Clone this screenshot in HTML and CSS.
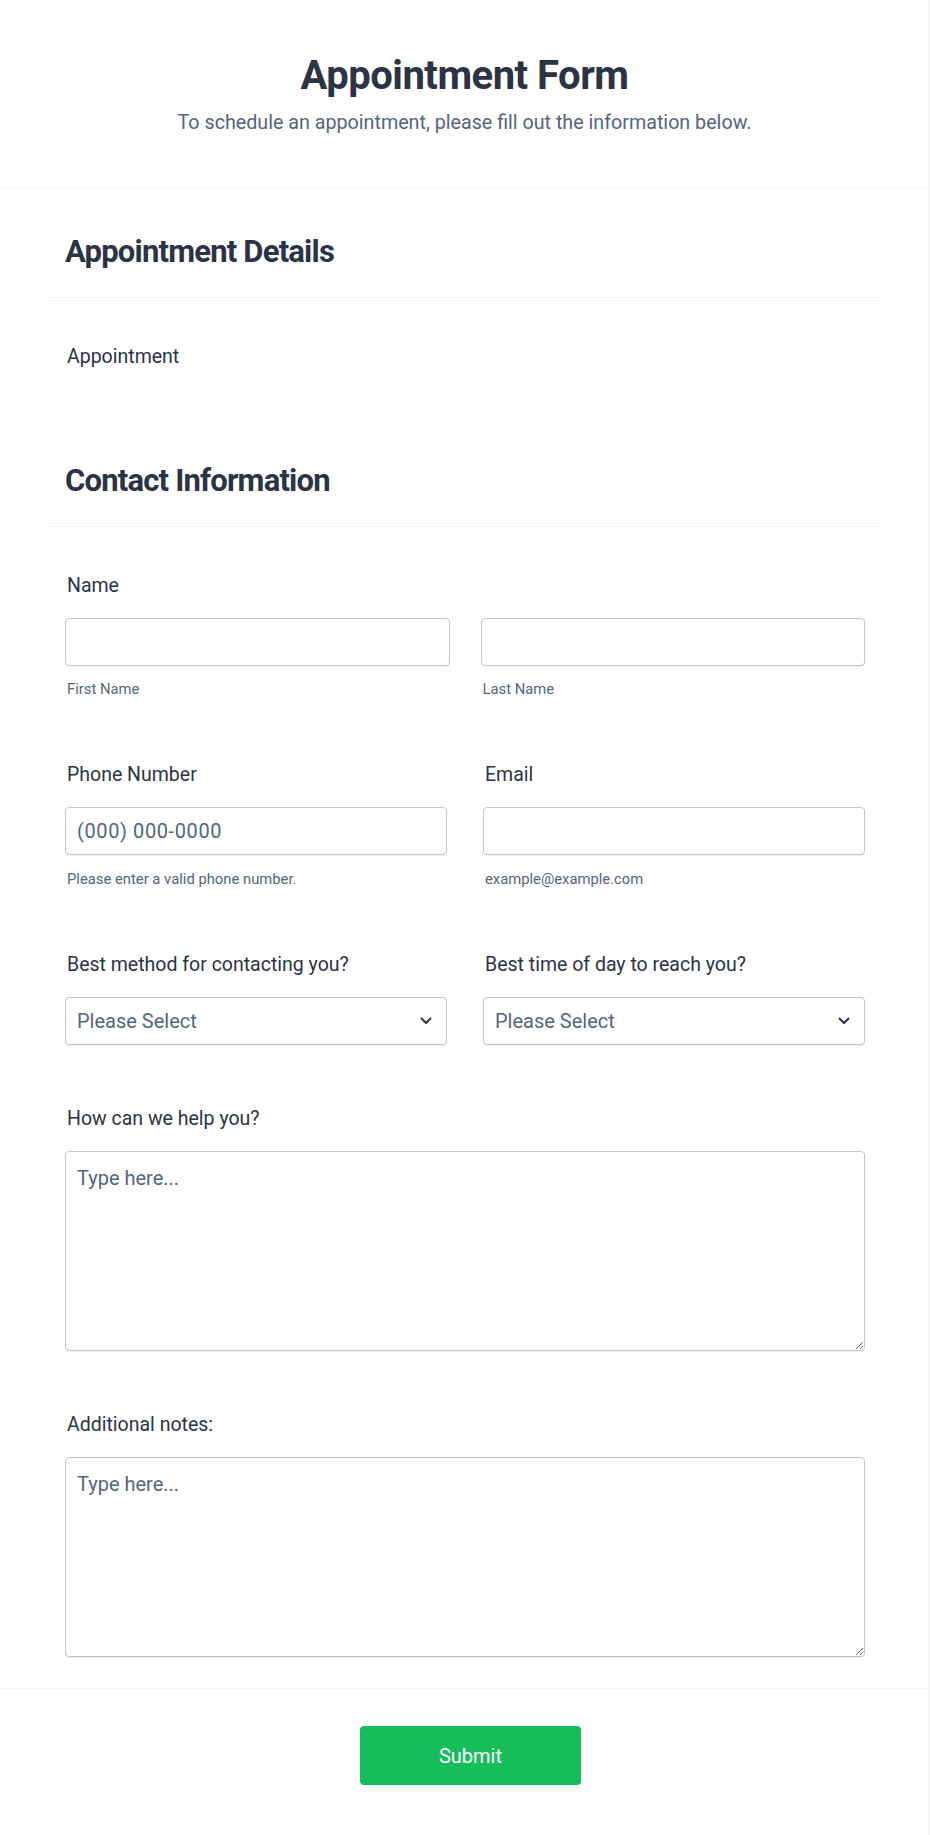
FILE: index.html
```html
<!DOCTYPE html>
<html lang="en">
<head>
<meta charset="utf-8">
<title>Appointment Form</title>
<link rel="stylesheet" href="styles.css">
</head>
<body>
<div class="form">
  <header class="form-header">
    <h1 class="title">Appointment Form</h1>
    <p class="subtitle">To schedule an appointment, please fill out the information below.</p>
  </header>

  <main class="form-body">
    <h2 class="section-head first">Appointment Details</h2>
    <div class="field appt">
      <label class="label">Appointment</label>
    </div>

    <h2 class="section-head second">Contact Information</h2>

    <div class="field row-name">
      <label class="label">Name</label>
      <div class="pair pair-name">
        <div class="col">
          <input class="input" type="text">
          <span class="sublabel">First Name</span>
        </div>
        <div class="col">
          <input class="input" type="text">
          <span class="sublabel">Last Name</span>
        </div>
      </div>
    </div>

    <div class="pair pair-wide row-gap">
      <div class="col">
        <label class="label">Phone Number</label>
        <input class="input phone" type="tel" placeholder="(000) 000-0000">
        <span class="sublabel">Please enter a valid phone number.</span>
      </div>
      <div class="col">
        <label class="label">Email</label>
        <input class="input" type="email">
        <span class="sublabel">example@example.com</span>
      </div>
    </div>

    <div class="pair pair-wide row-gap">
      <div class="col">
        <label class="label">Best method for contacting you?</label>
        <div class="select-wrap">
          <select class="input select"><option>Please Select</option></select>
          <svg class="chevron" width="12" height="8" viewBox="0 0 12 8"><path d="M1.5 1.5 L6 6 L10.5 1.5" fill="none" stroke="#2c3345" stroke-width="2" stroke-linecap="round" stroke-linejoin="round"/></svg>
        </div>
      </div>
      <div class="col">
        <label class="label">Best time of day to reach you?</label>
        <div class="select-wrap">
          <select class="input select"><option>Please Select</option></select>
          <svg class="chevron" width="12" height="8" viewBox="0 0 12 8"><path d="M1.5 1.5 L6 6 L10.5 1.5" fill="none" stroke="#2c3345" stroke-width="2" stroke-linecap="round" stroke-linejoin="round"/></svg>
        </div>
      </div>
    </div>

    <div class="field row-help">
      <label class="label">How can we help you?</label>
      <textarea class="input area" placeholder="Type here..."></textarea>
    </div>

    <div class="field row-notes">
      <label class="label">Additional notes:</label>
      <textarea class="input area" placeholder="Type here..."></textarea>
    </div>
  </main>

  <footer class="form-footer">
    <button class="submit" type="button">Submit</button>
  </footer>
</div>
</body>
</html>
```

FILE: styles.css
```css
* { box-sizing: border-box; }

html, body {
  margin: 0;
  padding: 0;
  background: #ffffff;
}

body {
  font-family: Roboto, "Liberation Sans", Arial, sans-serif;
  color: #2c3345;
}

.form {
  width: 930px;
  min-height: 1835px;
  border-right: 1px solid #f1f1f4;
}

.form-header {
  padding: 52px 0 53px;
  border-bottom: 1px solid #f3f3fe;
  text-align: center;
}

.title {
  margin: 0;
  font-size: 40px;
  line-height: 48px;
  font-weight: 700;
  letter-spacing: -0.5px;
  color: #2c3345;
}

.subtitle {
  margin: 11px 0 0;
  font-size: 19.7px;
  line-height: 24px;
  color: #57647e;
}

.form-body {
  padding: 0 45px 31px 47px;
}

.section-head {
  margin: 0;
  padding: 0 18px 25px;
  font-size: 31px;
  line-height: 40px;
  font-weight: 700;
  letter-spacing: -0.8px;
  color: #2c3345;
  border-bottom: 1px solid #f3f3fe;
}

.section-head.first { margin-top: 43px; }

.section-head.second { margin-top: 92.5px; }

.field {
  padding: 0 19px 0 18px;
}

.appt { margin-top: 46.5px; }

.row-name { margin-top: 46.5px; }

.label {
  display: block;
  font-size: 19.5px;
  line-height: 24px;
  color: #2c3345;
  padding-left: 2px;
}

.pair {
  display: grid;
  grid-template-columns: 1fr 1fr;
}

.pair-name {
  column-gap: 31px;
  margin-top: 20px;
}

.pair-wide {
  column-gap: 36px;
  padding: 0 19px 0 18px;
}

.row-gap { margin-top: 65px; }

.col {
  display: flex;
  flex-direction: column;
}

.pair-wide .label { margin-bottom: 20px; }

.input {
  display: block;
  width: 100%;
  height: 48px;
  margin: 0;
  padding: 0 11px;
  border: 1px solid #c0c5d1;
  border-radius: 4px;
  background: #ffffff;
  font-family: Roboto, "Liberation Sans", Arial, sans-serif;
  font-size: 20px;
  color: #2c3345;
  box-shadow: 0 1px 0 rgba(120, 130, 150, 0.12);
  outline: none;
}

.input::placeholder {
  color: #57647e;
  opacity: 1;
}

.phone {
  letter-spacing: 0.6px;
}

.sublabel {
  display: block;
  margin-top: 14.5px;
  font-size: 14.8px;
  line-height: 18px;
  color: #57647e;
  padding-left: 2px;
}

.select-wrap {
  position: relative;
}

.select {
  appearance: none;
  -webkit-appearance: none;
  color: #57647e;
  line-height: 46px;
}

.chevron {
  position: absolute;
  right: 15px;
  top: 20px;
  pointer-events: none;
}

.row-help { margin-top: 62px; }

.row-notes { margin-top: 62.5px; }

.area {
  height: 200px;
  margin-top: 20px;
  padding: 14px 11px;
  line-height: 24px;
  resize: vertical;
}

.form-footer {
  border-top: 1px solid #f3f3fe;
  padding: 37px 0 50px 12px;
  display: flex;
  justify-content: center;
}

.submit {
  width: 221px;
  height: 59px;
  border: none;
  border-radius: 4px;
  background: #18bd5b;
  color: #ffffff;
  font-family: Roboto, "Liberation Sans", Arial, sans-serif;
  font-size: 20px;
  cursor: pointer;
}
```
